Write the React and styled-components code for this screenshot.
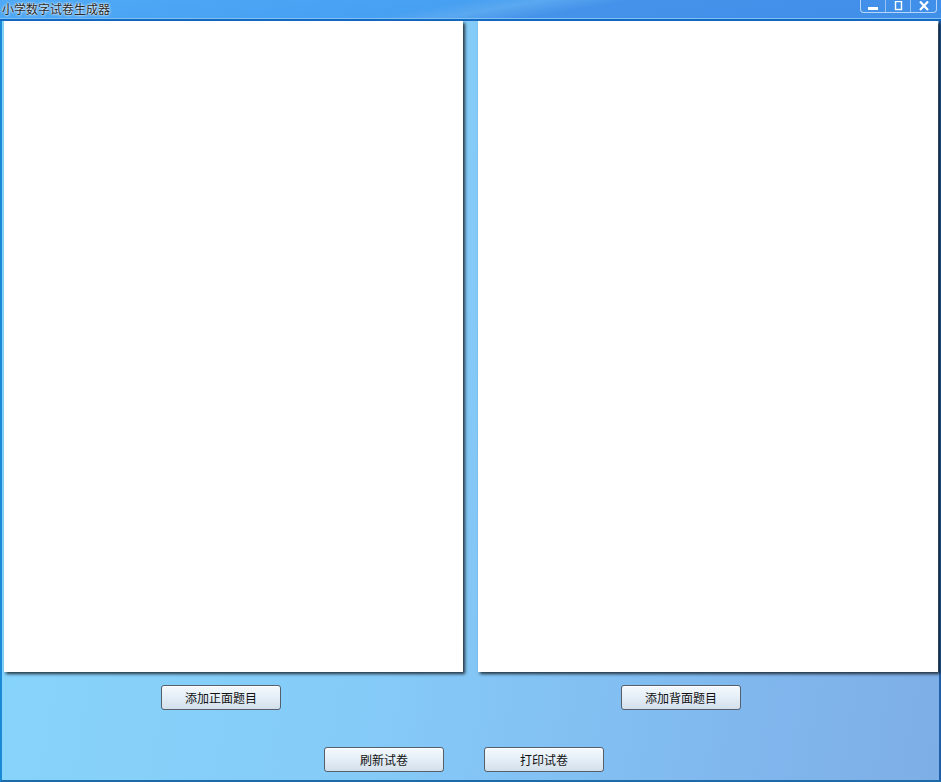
import styled, { createGlobalStyle } from 'styled-components';

const GlobalStyle = createGlobalStyle`
    html, body {
        margin: 0;
        padding: 0;
        background: #ffffff;
    }
    * {
        box-sizing: border-box;
    }
`;

const FONT = `"Noto Sans CJK SC", "Liberation Sans", sans-serif`;

export default function App() {
    return (
        <>
            <GlobalStyle />
            <Window>
                <TitleBar>
                    <Title>小学数字试卷生成器</Title>
                    <Controls>
                        <Control>
                            <svg width="12" height="10" viewBox="0 0 12 10">
                                <rect x="1" y="6" width="10" height="3" fill="#fff" />
                            </svg>
                        </Control>
                        <Control>
                            <svg width="12" height="10" viewBox="0 0 12 10">
                                <rect x="3.5" y="0.5" width="6" height="8" fill="none" stroke="#fff" strokeWidth="1.4" />
                            </svg>
                        </Control>
                        <Control $last>
                            <svg width="12" height="10" viewBox="0 0 12 10">
                                <path d="M2 0.5 L10 9 M10 0.5 L2 9" stroke="#fff" strokeWidth="2.2" />
                            </svg>
                        </Control>
                    </Controls>
                </TitleBar>
                <Body>
                    <Panels>
                        <Sheet />
                        <Sheet />
                    </Panels>
                    <ButtonRow $left={161} $gap={340} $top={13}>
                        <Button>添加正面题目</Button>
                        <Button>添加背面题目</Button>
                    </ButtonRow>
                    <ButtonRow $left={324} $gap={40} $top={37}>
                        <Button>刷新试卷</Button>
                        <Button>打印试卷</Button>
                    </ButtonRow>
                </Body>
            </Window>
        </>
    );
}

const Window = styled.div`
    width: 941px;
    height: 782px;
    display: flex;
    flex-direction: column;
    font-family: ${FONT};
    overflow: hidden;
`;

const TitleBar = styled.div`
    height: 21px;
    flex: none;
    display: flex;
    justify-content: space-between;
    align-items: flex-start;
    background: linear-gradient(170deg, #50aaf6 0%, #47a0f2 45%, #5aa8f0 52%, #4592ea 60%, #3f8ee8 100%);
    border-bottom: 2px solid #1369c4;
    box-shadow: inset 0 -1px 0 #7cc0f4;
`;

const Title = styled.div`
    font-size: 12px;
    line-height: 17px;
    padding-left: 2px;
    color: #2a2a2a;
    text-shadow: 0 0 3px #ffffff, 0 0 2px #ffffff;
`;

const Controls = styled.div`
    display: flex;
    margin-right: 4px;
    height: 13px;
    border: 1px solid rgba(220, 236, 255, 0.75);
    border-top: none;
    border-radius: 0 0 4px 4px;
`;

const Control = styled.div`
    width: 25px;
    display: flex;
    align-items: center;
    justify-content: center;
    border-right: ${p => (p.$last ? 'none' : '1px solid rgba(220, 236, 255, 0.55)')};
`;

const Body = styled.div`
    flex: 1;
    display: flex;
    flex-direction: column;
    padding: 0 1px 0 2px;
    border-left: 2px solid #1b8ad6;
    border-right: 2px solid #1f5fa8;
    border-bottom: 2px solid #1d6aa8;
    background: linear-gradient(100deg, #87d6fc 0%, #85cbf8 45%, #80b8ee 80%, #7eaee6 100%);
`;

const Panels = styled.div`
    display: grid;
    grid-template-columns: 459px 460px;
    column-gap: 15px;
    height: 651px;
    flex: none;
`;

const Sheet = styled.div`
    background: #ffffff;
    box-shadow: 2px 2px 3px rgba(0, 0, 0, 0.75);
`;

const ButtonRow = styled.div`
    display: flex;
    gap: ${p => p.$gap}px;
    padding-left: ${p => p.$left - 4}px;
    margin-top: ${p => p.$top}px;
`;

const Button = styled.button`
    width: 120px;
    height: 25px;
    padding: 0;
    font-family: ${FONT};
    font-size: 12px;
    color: #111;
    border: 1px solid #55606c;
    border-radius: 3px;
    background: linear-gradient(180deg, #f4f9fd 0%, #e4eef7 50%, #d3dfea 100%);
    box-shadow: inset 0 1px 0 #ffffff;
    cursor: pointer;
`;
